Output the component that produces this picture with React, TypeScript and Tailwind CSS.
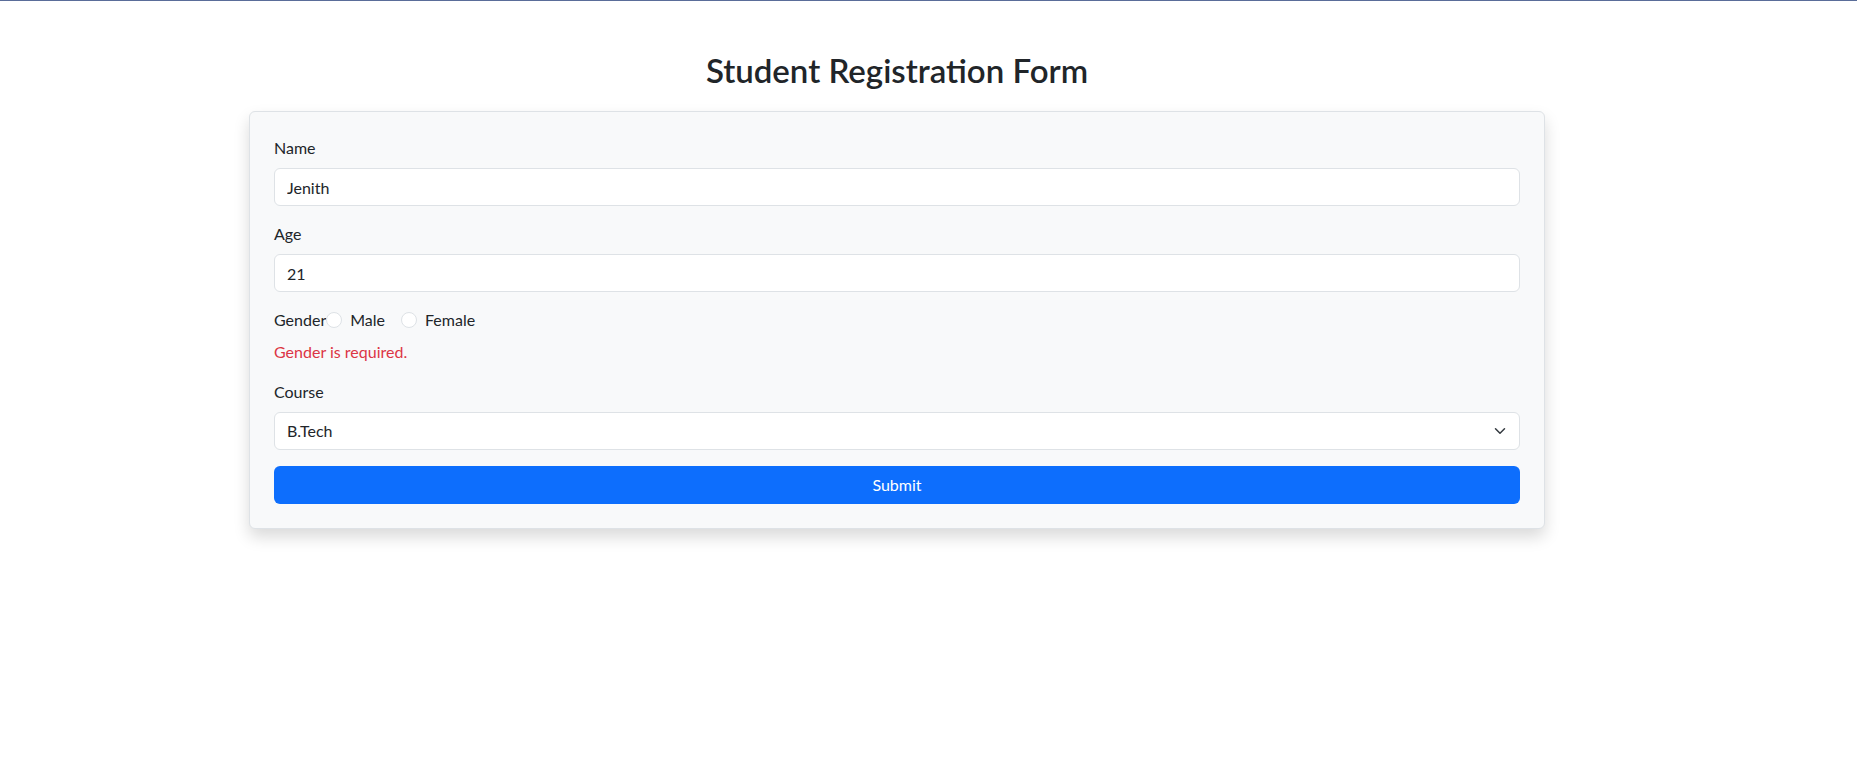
import { useState } from "react";

const FONT = { fontFamily: '"Segoe UI", Lato, Roboto, "Liberation Sans", sans-serif' };

function Chevron() {
  return (
    <svg width="16" height="12" viewBox="0 0 16 16" fill="none" className="pointer-events-none absolute right-3 top-1/2 -translate-y-1/2">
      <path d="m2 5 6 6 6-6" stroke="#343a40" strokeWidth="2" strokeLinecap="round" strokeLinejoin="round" />
    </svg>
  );
}

function Radio({ id, label, checked, onChange }: { id: string; label: string; checked: boolean; onChange: () => void }) {
  return (
    <label htmlFor={id} className="mr-4 inline-flex items-center">
      <input
        id={id}
        type="radio"
        name="gender"
        checked={checked}
        onChange={onChange}
        className="m-0 h-4 w-4 shrink-0 appearance-none rounded-full border border-[#dee2e6] bg-white checked:border-[5px] checked:border-[#0d6efd]"
      />
      <span className="ml-2">{label}</span>
    </label>
  );
}

export default function App() {
  const [name, setName] = useState("Jenith");
  const [age, setAge] = useState("21");
  const [gender, setGender] = useState("");
  const [course, setCourse] = useState("B.Tech");

  const inputCls =
    "block h-[38px] w-full rounded-[6px] border border-[#dee2e6] bg-white px-3 text-base leading-6 text-[#212529] outline-none";

  return (
    <div className="min-h-[769px] border-t border-[#5a6d99] bg-white text-base leading-6 text-[#212529]" style={FONT}>
      <div className="ml-[237px] mt-[48px] w-[1320px] px-3">
        <h2 className="mb-[22px] pt-[2px] text-center text-[33px] font-semibold leading-[38px]">Student Registration Form</h2>
        <form
          className="rounded-[6px] border border-[#dee2e6] bg-[#f8f9fa] p-6 shadow-[0_8px_16px_rgba(0,0,0,0.15)]"
          onSubmit={(e) => e.preventDefault()}
        >
          <div className="mb-4">
            <label className="mb-2 block">Name</label>
            <input className={inputCls} value={name} onChange={(e) => setName(e.target.value)} />
          </div>
          <div className="mb-4">
            <label className="mb-2 block">Age</label>
            <input className={inputCls} value={age} onChange={(e) => setAge(e.target.value)} />
          </div>
          <div className="mb-4">
            <div className="flex items-center">
              <span>Gender</span>
              <Radio id="male" label="Male" checked={gender === "male"} onChange={() => setGender("male")} />
              <Radio id="female" label="Female" checked={gender === "female"} onChange={() => setGender("female")} />
            </div>
            {!gender && <div className="mt-2 text-[#dc3545]">Gender is required.</div>}
          </div>
          <div className="mb-4">
            <label className="mb-2 block">Course</label>
            <div className="relative">
              <select className={`${inputCls} appearance-none pr-9`} value={course} onChange={(e) => setCourse(e.target.value)}>
                <option>B.Tech</option>
                <option>M.Tech</option>
                <option>BCA</option>
                <option>MCA</option>
              </select>
              <Chevron />
            </div>
          </div>
          <button type="submit" className="block h-[38px] w-full rounded-[6px] bg-[#0d6efd] text-white">
            Submit
          </button>
        </form>
      </div>
    </div>
  );
}
